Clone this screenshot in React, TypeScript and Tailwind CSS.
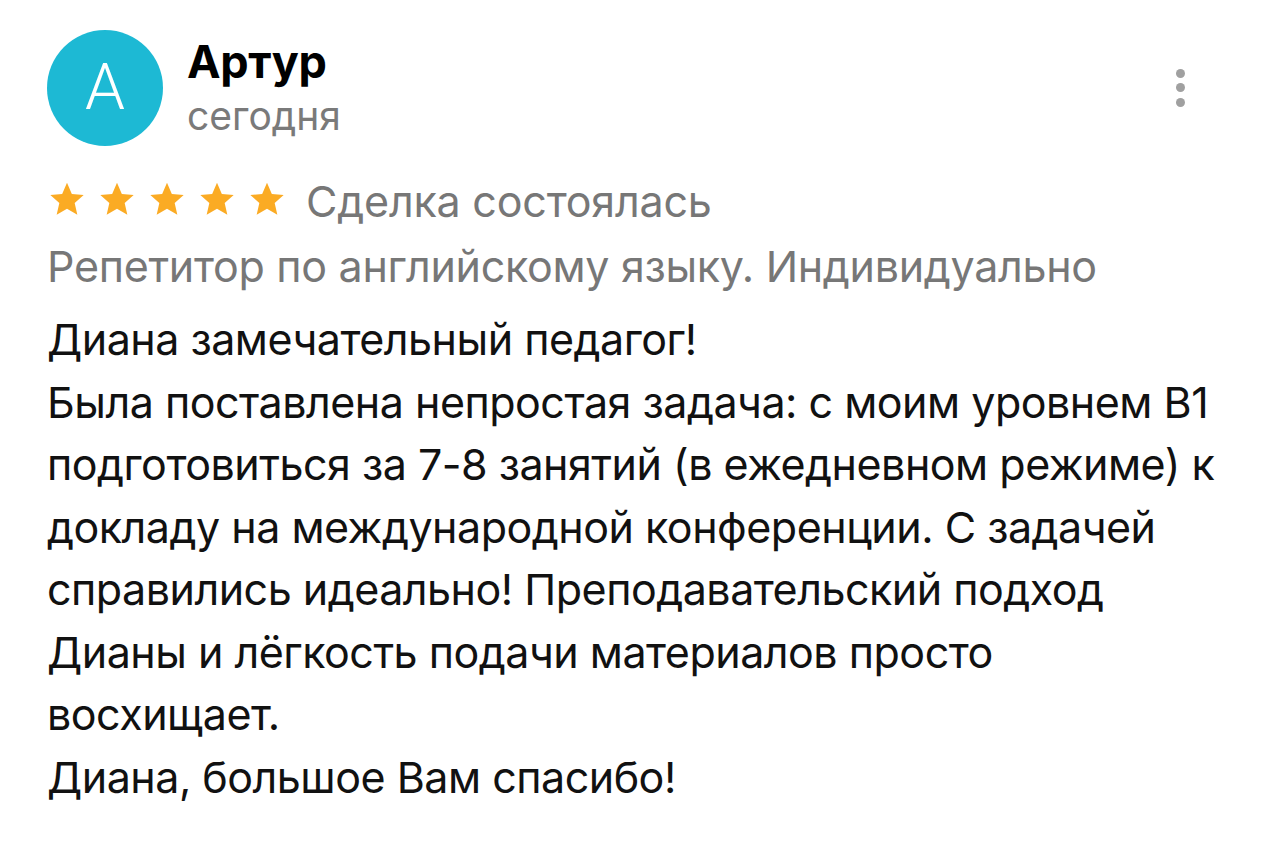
export default function App() {
  const lines = [
    "Диана замечательный педагог!",
    "Была поставлена непростая задача: с моим уровнем В1",
    "подготовиться за 7-8 занятий (в ежедневном режиме) к",
    "докладу на международной конференции. С задачей",
    "справились идеально! Преподавательский подход",
    "Дианы и лёгкость подачи материалов просто",
    "восхищает.",
    "Диана, большое Вам спасибо!",
  ];
  return (
    <div className="min-h-[855px] w-[1280px] bg-white px-[47px] pt-[30px] font-['Inter','Roboto',sans-serif] text-black">
      <div className="flex items-start">
        <div className="flex h-[116px] w-[116px] shrink-0 items-center justify-center rounded-full bg-[#1db9d4] font-['Roboto',sans-serif] text-[64px] font-light leading-none text-white">
          A
        </div>
        <div className="ml-[24px] flex flex-col pt-[7px]">
          <div className="text-[45px] font-bold leading-[50px] tracking-[-0.3px]">Артур</div>
          <div className="mt-[6px] text-[39px] leading-[46px] text-[#7a7a7a]">сегодня</div>
        </div>
        <div className="ml-auto mr-[48.5px] mt-[38.5px] flex flex-col gap-[5.5px]">
          <span className="h-[9px] w-[9px] rounded-full bg-[#a0a0a0]" />
          <span className="h-[9px] w-[9px] rounded-full bg-[#a0a0a0]" />
          <span className="h-[9px] w-[9px] rounded-full bg-[#a0a0a0]" />
        </div>
      </div>

      <div className="mt-[30px] flex items-center">
        <div className="mb-[4px] flex gap-[10px]">
          {[0, 1, 2, 3, 4].map((i) => (
            <svg key={i} width="40" height="40" viewBox="0 0 24 24">
              <path
                fill="#fbab24"
                d="M12 2.3l2.9 6.7 7.1.6-5.4 4.8 1.6 7.1L12 17.8l-6.2 3.7 1.6-7.1L2 9.6l7.1-.6z"
              />
            </svg>
          ))}
        </div>
        <span className="ml-[19px] text-[43px] leading-[50px] tracking-[-0.2px] text-[#777777]">
          Сделка состоялась
        </span>
      </div>

      <div className="mt-[15px] text-[43px] leading-[50px] tracking-[-0.3px] text-[#777777]">
        Репетитор по английскому языку. Индивидуально
      </div>

      <div className="mt-[17px] text-[43px] leading-[62.5px] tracking-[-0.5px] text-[#111111]">
        {lines.map((l, i) => (
          <div key={i} className="whitespace-nowrap">
            {l}
          </div>
        ))}
      </div>
    </div>
  );
}
